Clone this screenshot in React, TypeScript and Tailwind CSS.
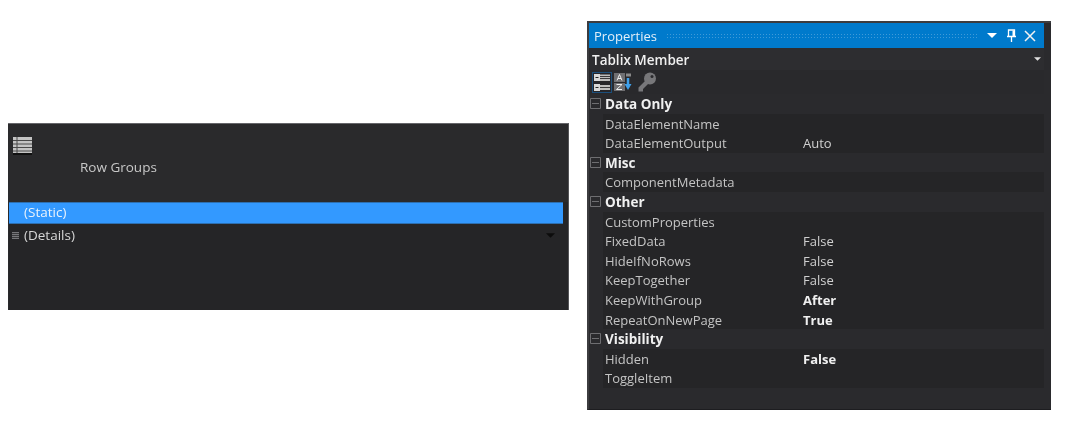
type Row = { name: string; value?: string; bold?: boolean; category?: boolean };

const rows: Row[] = [
  { name: "Data Only", category: true },
  { name: "DataElementName" },
  { name: "DataElementOutput", value: "Auto" },
  { name: "Misc", category: true },
  { name: "ComponentMetadata" },
  { name: "Other", category: true },
  { name: "CustomProperties" },
  { name: "FixedData", value: "False" },
  { name: "HideIfNoRows", value: "False" },
  { name: "KeepTogether", value: "False" },
  { name: "KeepWithGroup", value: "After", bold: true },
  { name: "RepeatOnNewPage", value: "True", bold: true },
  { name: "Visibility", category: true },
  { name: "Hidden", value: "False", bold: true },
  { name: "ToggleItem" },
];

const Caret = ({ className }: { className: string }) => (
  <svg viewBox="0 0 10 5" className={className}>
    <path d="M0 0h10L5 5z" fill="currentColor" />
  </svg>
);

const Collapse = () => (
  <svg viewBox="0 0 11 11" className="w-[11px] h-[11px] text-[#6e6e71]">
    <path d="M.5.5h10v10H.5zM2 5.500h7" fill="none" stroke="currentColor" />
  </svg>
);

const PinIcon = () => (
  <svg viewBox="0 0 9 13" className="w-[9px] h-[13px] ml-[10px] text-white">
    <path d="M1.500 1h6v6.500h-6zM0 7.500h9M4.500 8v5" fill="none" stroke="currentColor" strokeWidth="1.300" />
    <path d="M5.500 1.500h2v6h-2z" fill="currentColor" />
  </svg>
);

const CloseIcon = () => (
  <svg viewBox="0 0 12 12" className="w-[12px] h-[12px] ml-[8px] text-[#f2f2f2]">
    <path d="M1 1l10 10M11 1 1 11" fill="none" stroke="currentColor" strokeWidth="1.500" />
  </svg>
);

const CategorizedIcon = () => (
  <div className="w-[20px] h-[21px] border border-[#1c4f7c] bg-[#26262a]">
    <svg viewBox="0 0 18 19" className="w-full h-full">
      <path d="M1 1h6v7H1zM1 11h6v7H1z" fill="#d8d8d8" />
      <path d="M7 1.500h10V8H7zM7 12h10v5H7z" fill="#bdbdbd" />
      <path d="M7 3.500h10M7 5.500h10M7 14.500h10" stroke="#3a3a3c" />
      <path d="M2.500 4.500h3M2.500 14.500h3" stroke="#222" />
    </svg>
  </div>
);

const AlphaIcon = () => (
  <svg viewBox="0 0 20 20" className="w-[20px] h-[20px]">
    <rect x="1" y="1" width="11" height="9" fill="#6f6f72" />
    <rect x="1" y="11" width="11" height="8" fill="#6f6f72" />
    <path d="M4 8.500 6.500 2.500 9 8.500M5 6.500h3" fill="none" stroke="#ececec" />
    <path d="M3.500 12.500h5.500l-5.500 5h5.500" fill="none" stroke="#ececec" />
    <path d="M15 6v7" stroke="#3fa0ea" strokeWidth="2.500" />
    <path d="M11.500 12h7L15 18z" fill="#3fa0ea" />
    <path d="M13 3h5" stroke="#8a8a8a" strokeWidth="3" />
  </svg>
);

const KeyIcon = () => (
  <svg viewBox="0 0 20 20" className="w-[20px] h-[20px] ml-[3px] text-[#77777a]">
    <circle cx="13" cy="6.500" r="6" fill="currentColor" />
    <path d="M9 8 1.500 15.500V19.500H6V17l6-6z" fill="currentColor" />
    <circle cx="15" cy="4.500" r="1.500" fill="#2a2a2d" />
  </svg>
);

const PropertiesPanel = () => (
  <div className="w-[464px] h-[389px] ml-[18px] mt-[21px] flex flex-col bg-[#2a2a2d] border-t-2 border-l-2 border-[#3c3c3f] border-b border-b-[#1d1d20]">
    <div className="flex flex-col flex-1 w-[455px]">
      <div className="h-[25px] shrink-0 bg-[#007acc] flex items-center pl-[5px] pr-[8px] text-[13px] text-[#e4eff8]">
        <span className="pt-[2px]">Properties</span>
        <div className="flex-1 h-[6px] mx-[9px] bg-[radial-gradient(#3f9ad8_1px,transparent_1px)] bg-[length:3px_3px]" />
        <Caret className="w-[10px] h-[5px] text-white" />
        <PinIcon />
        <CloseIcon />
      </div>
      <div className="h-[22px] shrink-0 bg-[#2d2d30] flex items-center justify-between px-[3px] text-[13.500px] font-semibold text-[#f0f0f0]">
        <span className="pt-[2px]">Tablix Member</span>
        <Caret className="w-[7px] h-[4px] text-[#e0e0e0]" />
      </div>
      <div className="h-[24px] shrink-0 bg-[#29292c] flex items-center pl-[3px] gap-[1px]">
        <CategorizedIcon />
        <AlphaIcon />
        <KeyIcon />
      </div>
      <div className="flex flex-col">
        {rows.map((row) =>
          row.category ? (
            <div key={row.name} className="h-[19.600px] flex items-center bg-[#2a2a2d]">
              <div className="w-[16px] pl-[1px] flex items-center"><Collapse /></div>
              <span className="text-[13.500px] font-bold text-[#f0f0f0] pt-[1px]">{row.name}</span>
            </div>
          ) : (
            <div key={row.name} className="h-[19.600px] flex items-center bg-[#2a2a2d] text-[13px]">
              <div className="w-[14px] shrink-0" />
              <div className="w-[198px] h-full flex items-center pl-[2px] pt-[2px] bg-[#252527] text-[#c4c4c4]">{row.name}</div>
              <div className={`flex-1 h-full flex items-center pl-[2px] pt-[2px] bg-[#252527] ${row.bold ? "font-bold text-[#f0f0f0]" : "text-[#d0d0d0]"}`}>
                {row.value}
              </div>
            </div>
          )
        )}
      </div>
    </div>
  </div>
);

const RowGroupsPanel = () => (
  <div className="w-[561px] h-[187px] ml-[8px] mt-[123px] flex flex-col bg-[#2a2a2c] border-t border-[#66666a] border-r border-r-[#555558]">
    <div className="h-[78px] shrink-0 flex flex-col pl-[5px] pt-[13px]">
      <svg viewBox="0 0 19 18" className="w-[19px] h-[18px]">
        <path d="M0 0h19v16H0z" fill="#c4c4c4" />
        <path d="M0 3.500h19M0 7h19M0 10.500h19M0 14h19M4 0v16" stroke="#4a4a4a" />
        <path d="M0 17h19" stroke="#111" strokeWidth="2" />
      </svg>
      <div className="pl-[67px] mt-[2px] text-[13.500px] leading-[20px] text-[#c8c8c8]">Row Groups</div>
    </div>
    <div className="flex-1 bg-[#252527] ml-[1px]">
      <div className="h-[22px] mr-[5px] bg-[#3399ff] border-y border-[#2d6fb0] flex items-center pl-[15px] pb-[2px] text-[13.500px] text-[#e8f2fc]">
        (Static)
      </div>
      <div className="h-[24px] flex items-center pl-[3px] pr-[13px] pb-[2px] text-[13.500px] text-[#d6d6d6]">
        <div className="w-[7px] h-[7px] mr-[5px] bg-[repeating-linear-gradient(#77777a_0_1px,#3a3a3c_1px_2px)]" />
        <span className="flex-1">(Details)</span>
        <Caret className="w-[9px] h-[5px] text-[#0c0c0c]" />
      </div>
    </div>
  </div>
);

export default function App() {
  return (
    <div className="w-[1086px] h-[434px] bg-white flex items-start overflow-hidden font-['Open_Sans','Noto_Sans',sans-serif] blur-[0.4px]">
      <RowGroupsPanel />
      <PropertiesPanel />
    </div>
  );
}
